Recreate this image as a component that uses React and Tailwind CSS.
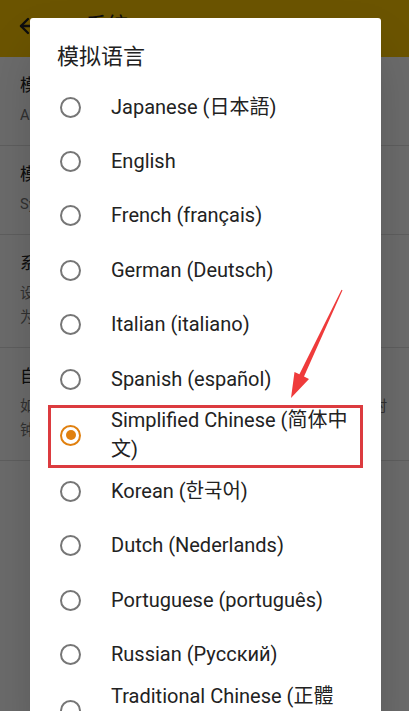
import { ArrowLeft } from "lucide-react";

const langs = [
  "Japanese (日本語)",
  "English",
  "French (français)",
  "German (Deutsch)",
  "Italian (italiano)",
  "Spanish (español)",
  "Simplified Chinese (简体中文)",
  "Korean (한국어)",
  "Dutch (Nederlands)",
  "Portuguese (português)",
  "Russian (Русский)",
  "Traditional Chinese (正體中文)",
];

const settings = [
  { title: "模拟语言", lines: ["Auto"] },
  { title: "模拟地区", lines: ["System default"] },
  { title: "系统语言", lines: ["设置应用内显示的语言，重启后生效", "为空时跟随系统"] },
  {
    title: "自动切换",
    lines: ["如果开启，应用在每次启动时自动切换语言并同步系统时钟和时区设置。"],
  },
];

function Radio({ checked }) {
  return (
    <div
      className={`w-[21px] h-[21px] shrink-0 rounded-full border-2 flex items-center justify-center ${
        checked ? "border-[#e0800f]" : "border-[#767676]"
      }`}
    >
      {checked ? <div className="w-[10px] h-[10px] rounded-full bg-[#e0800f]" /> : null}
    </div>
  );
}

export default function App() {
  const selected = "Simplified Chinese (简体中文)";

  return (
    <div
      className="relative w-[409px] h-[711px] overflow-hidden bg-white"
      style={{ fontFamily: "Roboto, 'Noto Sans CJK SC', 'Noto Sans CJK KR', sans-serif" }}
    >
      {/* page behind the dialog */}
      <div className="h-[57px] bg-[#ffc800] flex items-center gap-[46px] pl-4 pb-[6px]">
        <ArrowLeft size={24} strokeWidth={2.4} className="text-[#222]" />
        <div className="text-[21px] text-[#222]">系统</div>
      </div>
      <div>
        {settings.map((s, i) => (
          <div key={i} className="px-5 pt-4 pb-[18px] border-b border-[#e0e0e0]">
            <div className="text-[17px] leading-6 text-[#222]">{s.title}</div>
            <div className="mt-1.5 text-[14.7px] leading-6 text-[#757575]">
              {s.lines.map((l, j) => (
                <div key={j}>{l}</div>
              ))}
            </div>
          </div>
        ))}
      </div>

      {/* scrim */}
      <div className="absolute inset-0 bg-black/[0.58]" />

      {/* dialog */}
      <div className="absolute left-[30px] top-[18px] w-[351px] h-[720px] bg-white rounded-[3px] shadow-2xl pt-[24px]">
        <div className="pl-[27px] text-[22px] leading-[30px] text-[#212121]">模拟语言</div>
        <div className="mt-[8px]">
          {langs.map((l) => (
            <div key={l} className="min-h-[54.4px] flex items-center pl-[30px]">
              <Radio checked={l === selected} />
              <div className="ml-[30px] w-[242px] text-[20px] leading-[29px] text-[#222]">{l}</div>
            </div>
          ))}
        </div>
      </div>

      {/* annotation */}
      <div className="absolute left-[48px] top-[405px] w-[315px] h-[63px] border-[3px] border-[#dc3b3f]" />
      <svg className="absolute left-0 top-0" width="409" height="711" viewBox="0 0 409 711">
        <polygon
          fill="#ef3b3b"
          points="342.5,290.2 304,376.5 309,379 291,398 294.5,372 299.4,374.3 341.5,289.8"
        />
      </svg>
    </div>
  );
}
